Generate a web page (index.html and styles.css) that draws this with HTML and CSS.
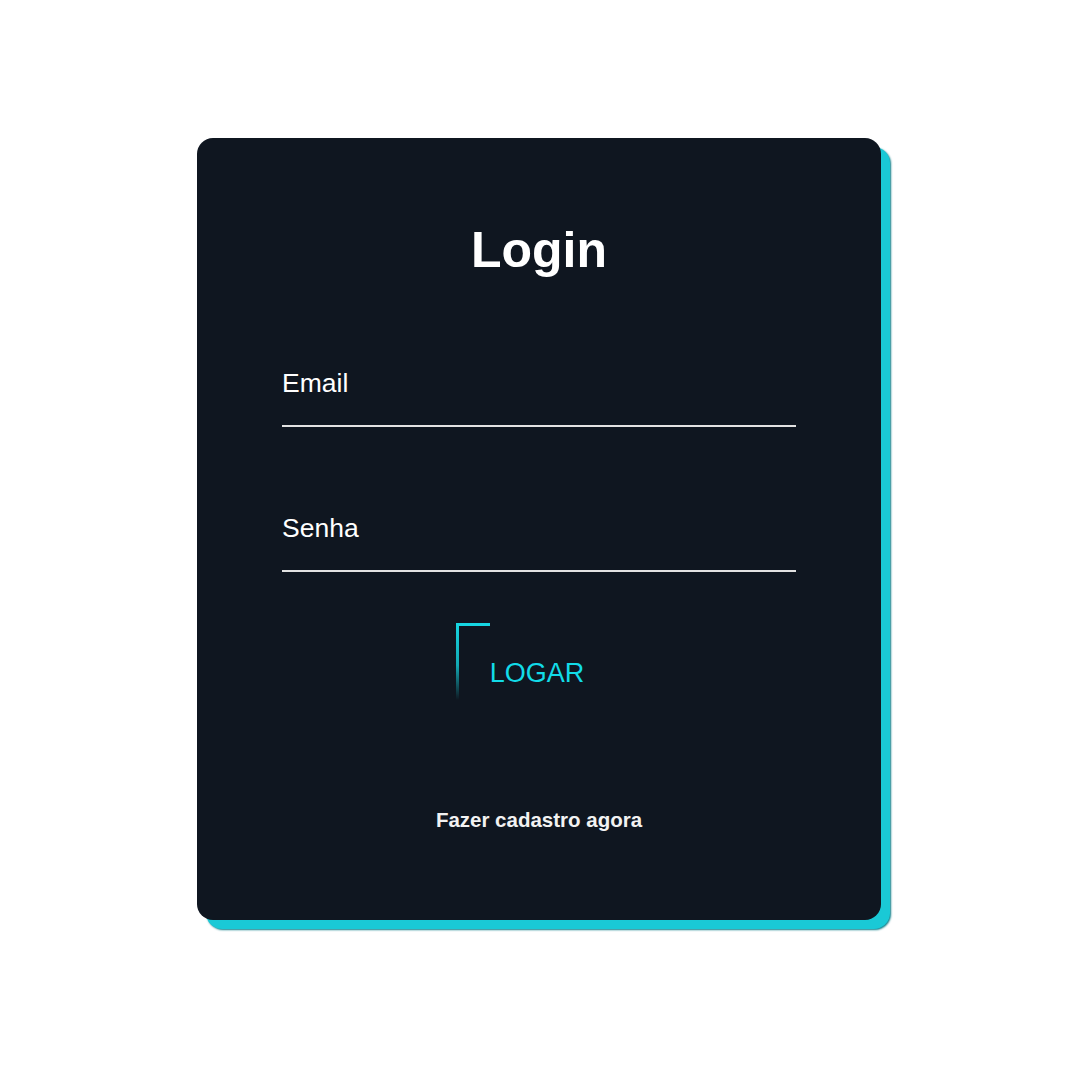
FILE: index.html
```html
<!DOCTYPE html>
<html lang="pt-BR">
<head>
<meta charset="utf-8">
<title>Login</title>
<link rel="stylesheet" href="styles.css">
</head>
<body>
  <main class="page">
    <form class="card">
      <h1 class="title">Login</h1>
      <div class="field field-email"><span class="field-label">Email</span></div>
      <div class="field field-pass"><span class="field-label">Senha</span></div>
      <div class="actions">
        <a class="btn" href="#">LOGAR</a>
      </div>
      <a class="signup" href="#">Fazer cadastro agora</a>
    </form>
  </main>
</body>
</html>
```
FILE: styles.css
```css
html, body {
  margin: 0;
  padding: 0;
  background: #ffffff;
  font-family: "Liberation Sans", Arial, sans-serif;
}

.page {
  box-sizing: border-box;
  min-height: 100vh;
  display: flex;
  justify-content: center;
  align-items: flex-start;
  padding-top: 138px;
  padding-bottom: 60px;
}

.card {
  box-sizing: border-box;
  width: 684px;
  height: 782px;
  margin-right: 2px;
  padding: 81px 85px 0 85px;
  background: #0f1620;
  border-radius: 16px;
  box-shadow: 9px 9px 0 #1ac9d6, 10px 10px 2px #0b7d88;
  display: flex;
  flex-direction: column;
}

.title {
  margin: 0;
  font-size: 50px;
  line-height: 62px;
  font-weight: 700;
  color: #ffffff;
  text-align: center;
}

.field {
  border-bottom: 2px solid #e2e2e2;
  padding-bottom: 27px;
}

.field-email {
  margin-top: 87px;
}

.field-pass {
  margin-top: 86px;
}

.field-label {
  display: block;
  font-size: 26.5px;
  line-height: 30px;
  color: #ffffff;
}

.actions {
  margin-top: 51px;
  display: flex;
  justify-content: center;
}

.btn {
  position: relative;
  display: block;
  padding: 35px 34px 12px 34px;
  margin-right: 4px;
  font-size: 27px;
  line-height: 30px;
  color: #12dbe8;
  text-decoration: none;
}

.btn::before {
  content: "";
  position: absolute;
  left: 0;
  top: 0;
  width: 34px;
  height: 3px;
  background: #16d6e2;
}

.btn::after {
  content: "";
  position: absolute;
  left: 0;
  top: 0;
  width: 3px;
  height: 77px;
  background: linear-gradient(to bottom, #16d6e2 0%, #12a9b4 55%, rgba(15, 22, 32, 0) 100%);
}

.signup {
  margin-top: 108px;
  font-size: 20.5px;
  line-height: 24px;
  font-weight: 700;
  color: #f2f2f2;
  text-align: center;
  text-decoration: none;
}
```
